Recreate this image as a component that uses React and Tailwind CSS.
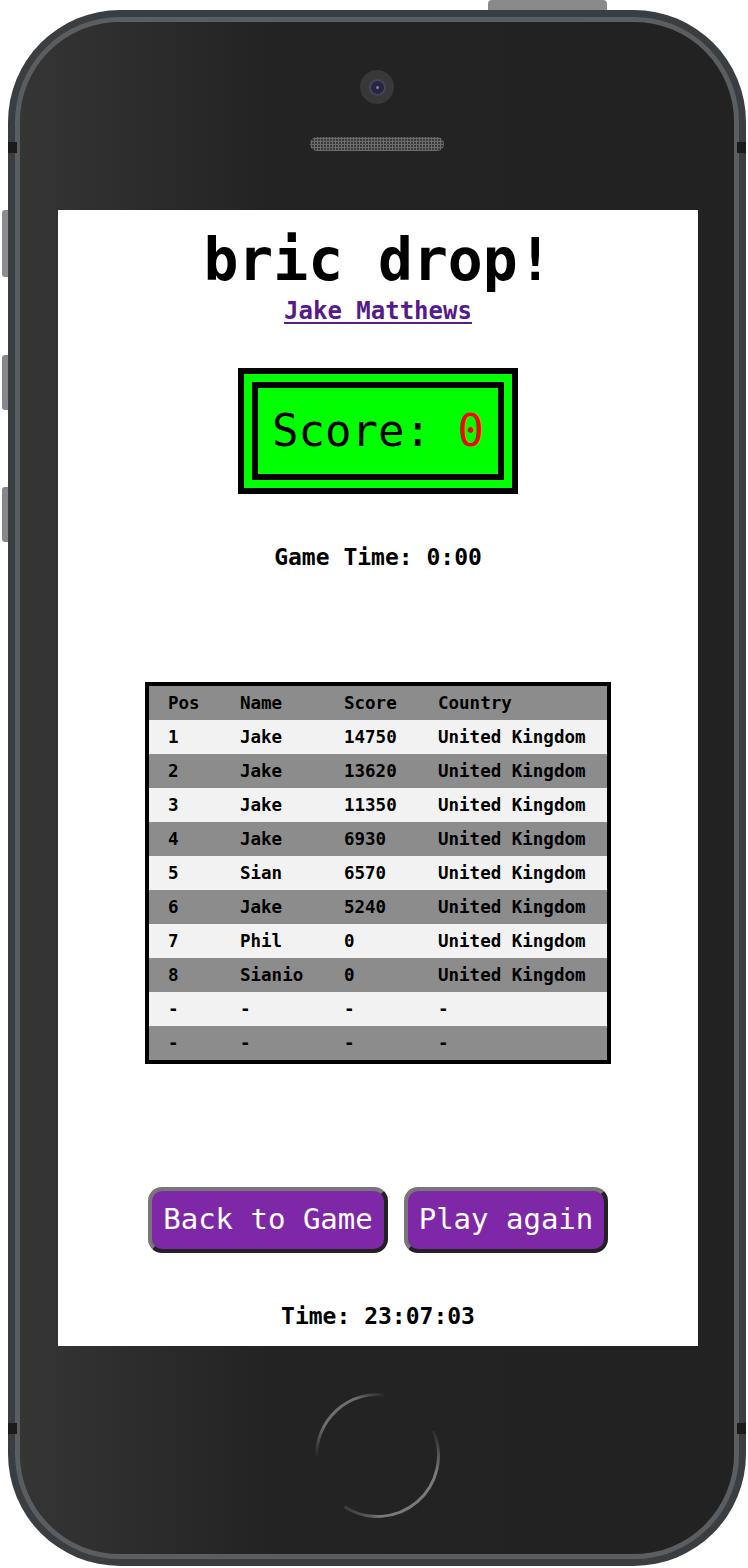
import React from 'react';

const scores = [
  { pos: '1', name: 'Jake', score: '14750', country: 'United Kingdom' },
  { pos: '2', name: 'Jake', score: '13620', country: 'United Kingdom' },
  { pos: '3', name: 'Jake', score: '11350', country: 'United Kingdom' },
  { pos: '4', name: 'Jake', score: '6930', country: 'United Kingdom' },
  { pos: '5', name: 'Sian', score: '6570', country: 'United Kingdom' },
  { pos: '6', name: 'Jake', score: '5240', country: 'United Kingdom' },
  { pos: '7', name: 'Phil', score: '0', country: 'United Kingdom' },
  { pos: '8', name: 'Sianio', score: '0', country: 'United Kingdom' },
  { pos: '-', name: '-', score: '-', country: '-' },
  { pos: '-', name: '-', score: '-', country: '-' },
];

const mono = "font-['DejaVu_Sans_Mono','Liberation_Mono',monospace]";

function HomeButton() {
  return (
    <svg width="125" height="125" viewBox="0 0 125 125">
      <defs>
        <linearGradient id="arcA" x1="0" y1="1" x2="1" y2="0">
          <stop offset="0%" stopColor="#6e6e6e" stopOpacity="0" />
          <stop offset="30%" stopColor="#6e6e6e" stopOpacity="1" />
          <stop offset="75%" stopColor="#6e6e6e" stopOpacity="1" />
          <stop offset="100%" stopColor="#6e6e6e" stopOpacity="0" />
        </linearGradient>
        <linearGradient id="arcB" x1="1" y1="0" x2="0" y2="1">
          <stop offset="0%" stopColor="#7a7a7a" stopOpacity="0" />
          <stop offset="25%" stopColor="#7a7a7a" stopOpacity="1" />
          <stop offset="80%" stopColor="#7a7a7a" stopOpacity="1" />
          <stop offset="100%" stopColor="#7a7a7a" stopOpacity="0" />
        </linearGradient>
      </defs>
      {/* upper-left arc */}
      <path d="M 1.6 64.6 A 61 61 0 0 1 70.6 2" fill="none" stroke="url(#arcA)" strokeWidth="3" />
      {/* right / bottom arc */}
      <path d="M 118.2 37.7 A 61 61 0 0 1 29.3 113.7" fill="none" stroke="url(#arcB)" strokeWidth="3" />
    </svg>
  );
}

export default function App() {
  return (
    <div className={`relative w-[748px] h-[1568px] bg-white pt-[10px] pl-[8px] ${mono}`}>
      {/* hardware buttons */}
      <div className="absolute left-[488px] top-0 w-[119px] h-[11px] rounded-t-[4px] bg-[#8a8a8a]" />
      <div className="absolute left-[2px] top-[210px] w-[7px] h-[67px] rounded-l-[3px] bg-[#8b8b93]" />
      <div className="absolute left-[2px] top-[355px] w-[7px] h-[55px] rounded-l-[3px] bg-[#86868f]" />
      <div className="absolute left-[2px] top-[487px] w-[7px] h-[55px] rounded-l-[3px] bg-[#86868f]" />

      {/* phone body */}
      <div className="relative w-[738px] h-[1556px] rounded-[112px] bg-[#3b3e41] p-[7px]">
        <div className="absolute left-0 top-[132px] w-[9px] h-[11px] bg-[#1b1b1b]" />
        <div className="absolute right-0 top-[132px] w-[9px] h-[11px] bg-[#1b1b1b]" />
        <div className="absolute left-0 top-[1413px] w-[9px] h-[11px] bg-[#1b1b1b]" />
        <div className="absolute right-0 top-[1413px] w-[9px] h-[11px] bg-[#1b1b1b]" />
        <div className="h-full rounded-[105px] border-[5px] border-[#5b5e61]">
          <div className="h-full rounded-[100px] bg-linear-to-r from-[#353535] via-[#232323] via-35% to-[#222222] flex flex-col items-center">
            {/* camera */}
            <div className="mt-[48px] w-[34px] h-[34px] rounded-full bg-[#383838] flex items-center justify-center">
              <div className="w-[17px] h-[17px] rounded-full bg-[#262640] border-[2px] border-[#44445a] flex items-center justify-center">
                <div className="w-[3px] h-[3px] rounded-full bg-[#8080a0]" />
              </div>
            </div>
            {/* speaker */}
            <div className="mt-[33px] w-[134px] h-[14px] rounded-full bg-[#3a3a3a] bg-[radial-gradient(#6b6b6b_1px,transparent_1.2px)] bg-[length:3px_3px]" />

            {/* screen */}
            <div className="mt-[59px] ml-[2px] w-[640px] h-[1136px] bg-white flex flex-col items-center text-black">
              <h1 className="mt-[21px] text-[58px] leading-[58px] font-bold">bric drop!</h1>
              <a href="#" className="mt-[8px] text-[24px] leading-[28px] font-bold text-[#551a8b] underline underline-offset-[3px]">
                Jake Matthews
              </a>

              <div className="mt-[43px] border-[6px] border-black bg-[#00ff00] p-[8px]">
                <div className="w-[252px] h-[98px] border-[6px] border-black flex items-center justify-center text-[44px]">
                  <span>Score:&nbsp;</span>
                  <span className="text-[#ff0000]">0</span>
                </div>
              </div>

              <p className="mt-[48px] text-[23px] leading-[30px] font-bold">Game Time: 0:00</p>

              <div className="mt-[110px] w-[466px] border-[4px] border-black text-[17.5px] font-bold">
                <div className="grid grid-cols-[72px_104px_94px_1fr] h-[34px] items-center pl-[19px] bg-[#8c8c8c]">
                  <span>Pos</span>
                  <span>Name</span>
                  <span>Score</span>
                  <span>Country</span>
                </div>
                {scores.map((row, i) => (
                  <div
                    key={i}
                    className={`grid grid-cols-[72px_104px_94px_1fr] h-[34px] items-center pl-[19px] ${i % 2 === 0 ? 'bg-[#f2f2f2]' : 'bg-[#8c8c8c]'}`}
                  >
                    <span>{row.pos}</span>
                    <span>{row.name}</span>
                    <span>{row.score}</span>
                    <span>{row.country}</span>
                  </div>
                ))}
              </div>

              <div className="mt-[123px] flex gap-[16px]">
                <button className="w-[240px] h-[66px] rounded-[14px] border-[4px] border-t-[#777777] border-l-[#777777] border-b-[#222222] border-r-[#222222] bg-[#7e28a8] text-white text-[29px]">
                  Back to Game
                </button>
                <button className="w-[204px] h-[66px] rounded-[14px] border-[4px] border-t-[#777777] border-l-[#777777] border-b-[#222222] border-r-[#222222] bg-[#7e28a8] text-white text-[29px]">
                  Play again
                </button>
              </div>

              <p className="mt-[48px] text-[23px] leading-[30px] font-bold">Time: 23:07:03</p>
            </div>

            {/* home button */}
            <div className="mt-[47px]">
              <HomeButton />
            </div>
          </div>
        </div>
      </div>
    </div>
  );
}
